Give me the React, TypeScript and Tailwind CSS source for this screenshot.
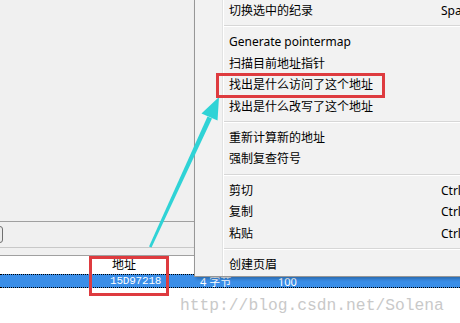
import React from 'react';

type Item = { label?: string; shortcut?: string; sep?: boolean };

const menu: Item[] = [
  { label: '切换选中的纪录', shortcut: 'Space' },
  { sep: true },
  { label: 'Generate pointermap' },
  { label: '扫描目前地址指针' },
  { label: '找出是什么访问了这个地址' },
  { label: '找出是什么改写了这个地址' },
  { sep: true },
  { label: '重新计算新的地址' },
  { label: '强制复查符号' },
  { sep: true },
  { label: '剪切', shortcut: 'Ctrl+X' },
  { label: '复制', shortcut: 'Ctrl+C' },
  { label: '粘贴', shortcut: 'Ctrl+V' },
  { sep: true },
  { label: '创建页眉' },
];

function ContextMenu() {
  return (
    <div className="absolute top-0 left-[194px] w-[300px] h-[277px] flex bg-[#f2f2f2] border-l border-b border-[#979797] shadow-[2px_2px_3px_rgba(0,0,0,0.25)]">
      <div className="w-[28px] shrink-0 border-r border-[#e2e3e3]" />
      <div className="flex-1 flex flex-col border-l border-white">
        {menu.map((m, i) =>
          m.sep ? (
            <div key={i} className="h-[9.75px] flex flex-col justify-center">
              <div className="h-px bg-[#d7d7d7] border-b border-white box-content" />
            </div>
          ) : (
            <div key={i} className="h-[21.5px] flex items-center pl-[5px] text-[12px] text-black">
              <span className="flex-1">{m.label}</span>
              {m.shortcut && <span className="w-[53px] shrink-0">{m.shortcut}</span>}
            </div>
          )
        )}
      </div>
    </div>
  );
}

function Arrow() {
  return (
    <svg className="absolute inset-0 pointer-events-none" width="460" height="323" viewBox="0 0 460 323">
      <polygon points="149,246.5 151.5,247.5 212,118.5 207.5,116.5" fill="#2fd3d6" />
      <polygon points="219,97 201.5,113.5 217.5,120.5" fill="#2fd3d6" />
    </svg>
  );
}

export default function App() {
  return (
    <div
      className="relative w-[460px] h-[323px] overflow-hidden bg-white"
      style={{ fontFamily: '"Noto Sans", "Noto Sans CJK SC", sans-serif' }}
    >
      <div className="h-[274px] bg-[#f0f0f0] flex flex-col">
        <div className="h-[222px] border-b border-[#a0a0a0]" />
        <div className="h-[25px] flex items-center">
          <div className="w-[14px] h-[17px] -ml-[11px] border border-[#707070] rounded-[3px] bg-[#ececec]" />
        </div>
        <div className="h-px bg-[#c8c8c8]" />
        <div className="h-[7px]" />
        <div className="h-px bg-[#a0a0a0]" />
        <div className="flex-1 bg-white flex items-center pl-[112px] text-[12px] text-black">
          地址
        </div>
      </div>
      <div className="h-[14px] bg-[#3a8ee8] border-y border-dotted border-black flex items-center text-[11px] text-white leading-none">
        <span className="ml-[110px] w-[90px] font-['Liberation_Mono',monospace] tracking-[-0.2px]">15D97218</span>
        <span className="w-[78px]">4 字节</span>
        <span>100</span>
      </div>
      <div className="h-[35px] flex items-center pl-[180px] pt-[1px] text-[16.3px] text-[#c9c9c9] font-['Liberation_Mono',monospace]">
        http://blog.csdn.net/Solena
      </div>

      <ContextMenu />
      <Arrow />
      <div className="absolute left-[89px] top-[256px] w-[80px] h-[40px] border-[3px] border-[#de3b3f]" />
      <div className="absolute left-[216px] top-[73px] w-[169px] h-[25px] border-[3px] border-[#de3b3f]" />
    </div>
  );
}
